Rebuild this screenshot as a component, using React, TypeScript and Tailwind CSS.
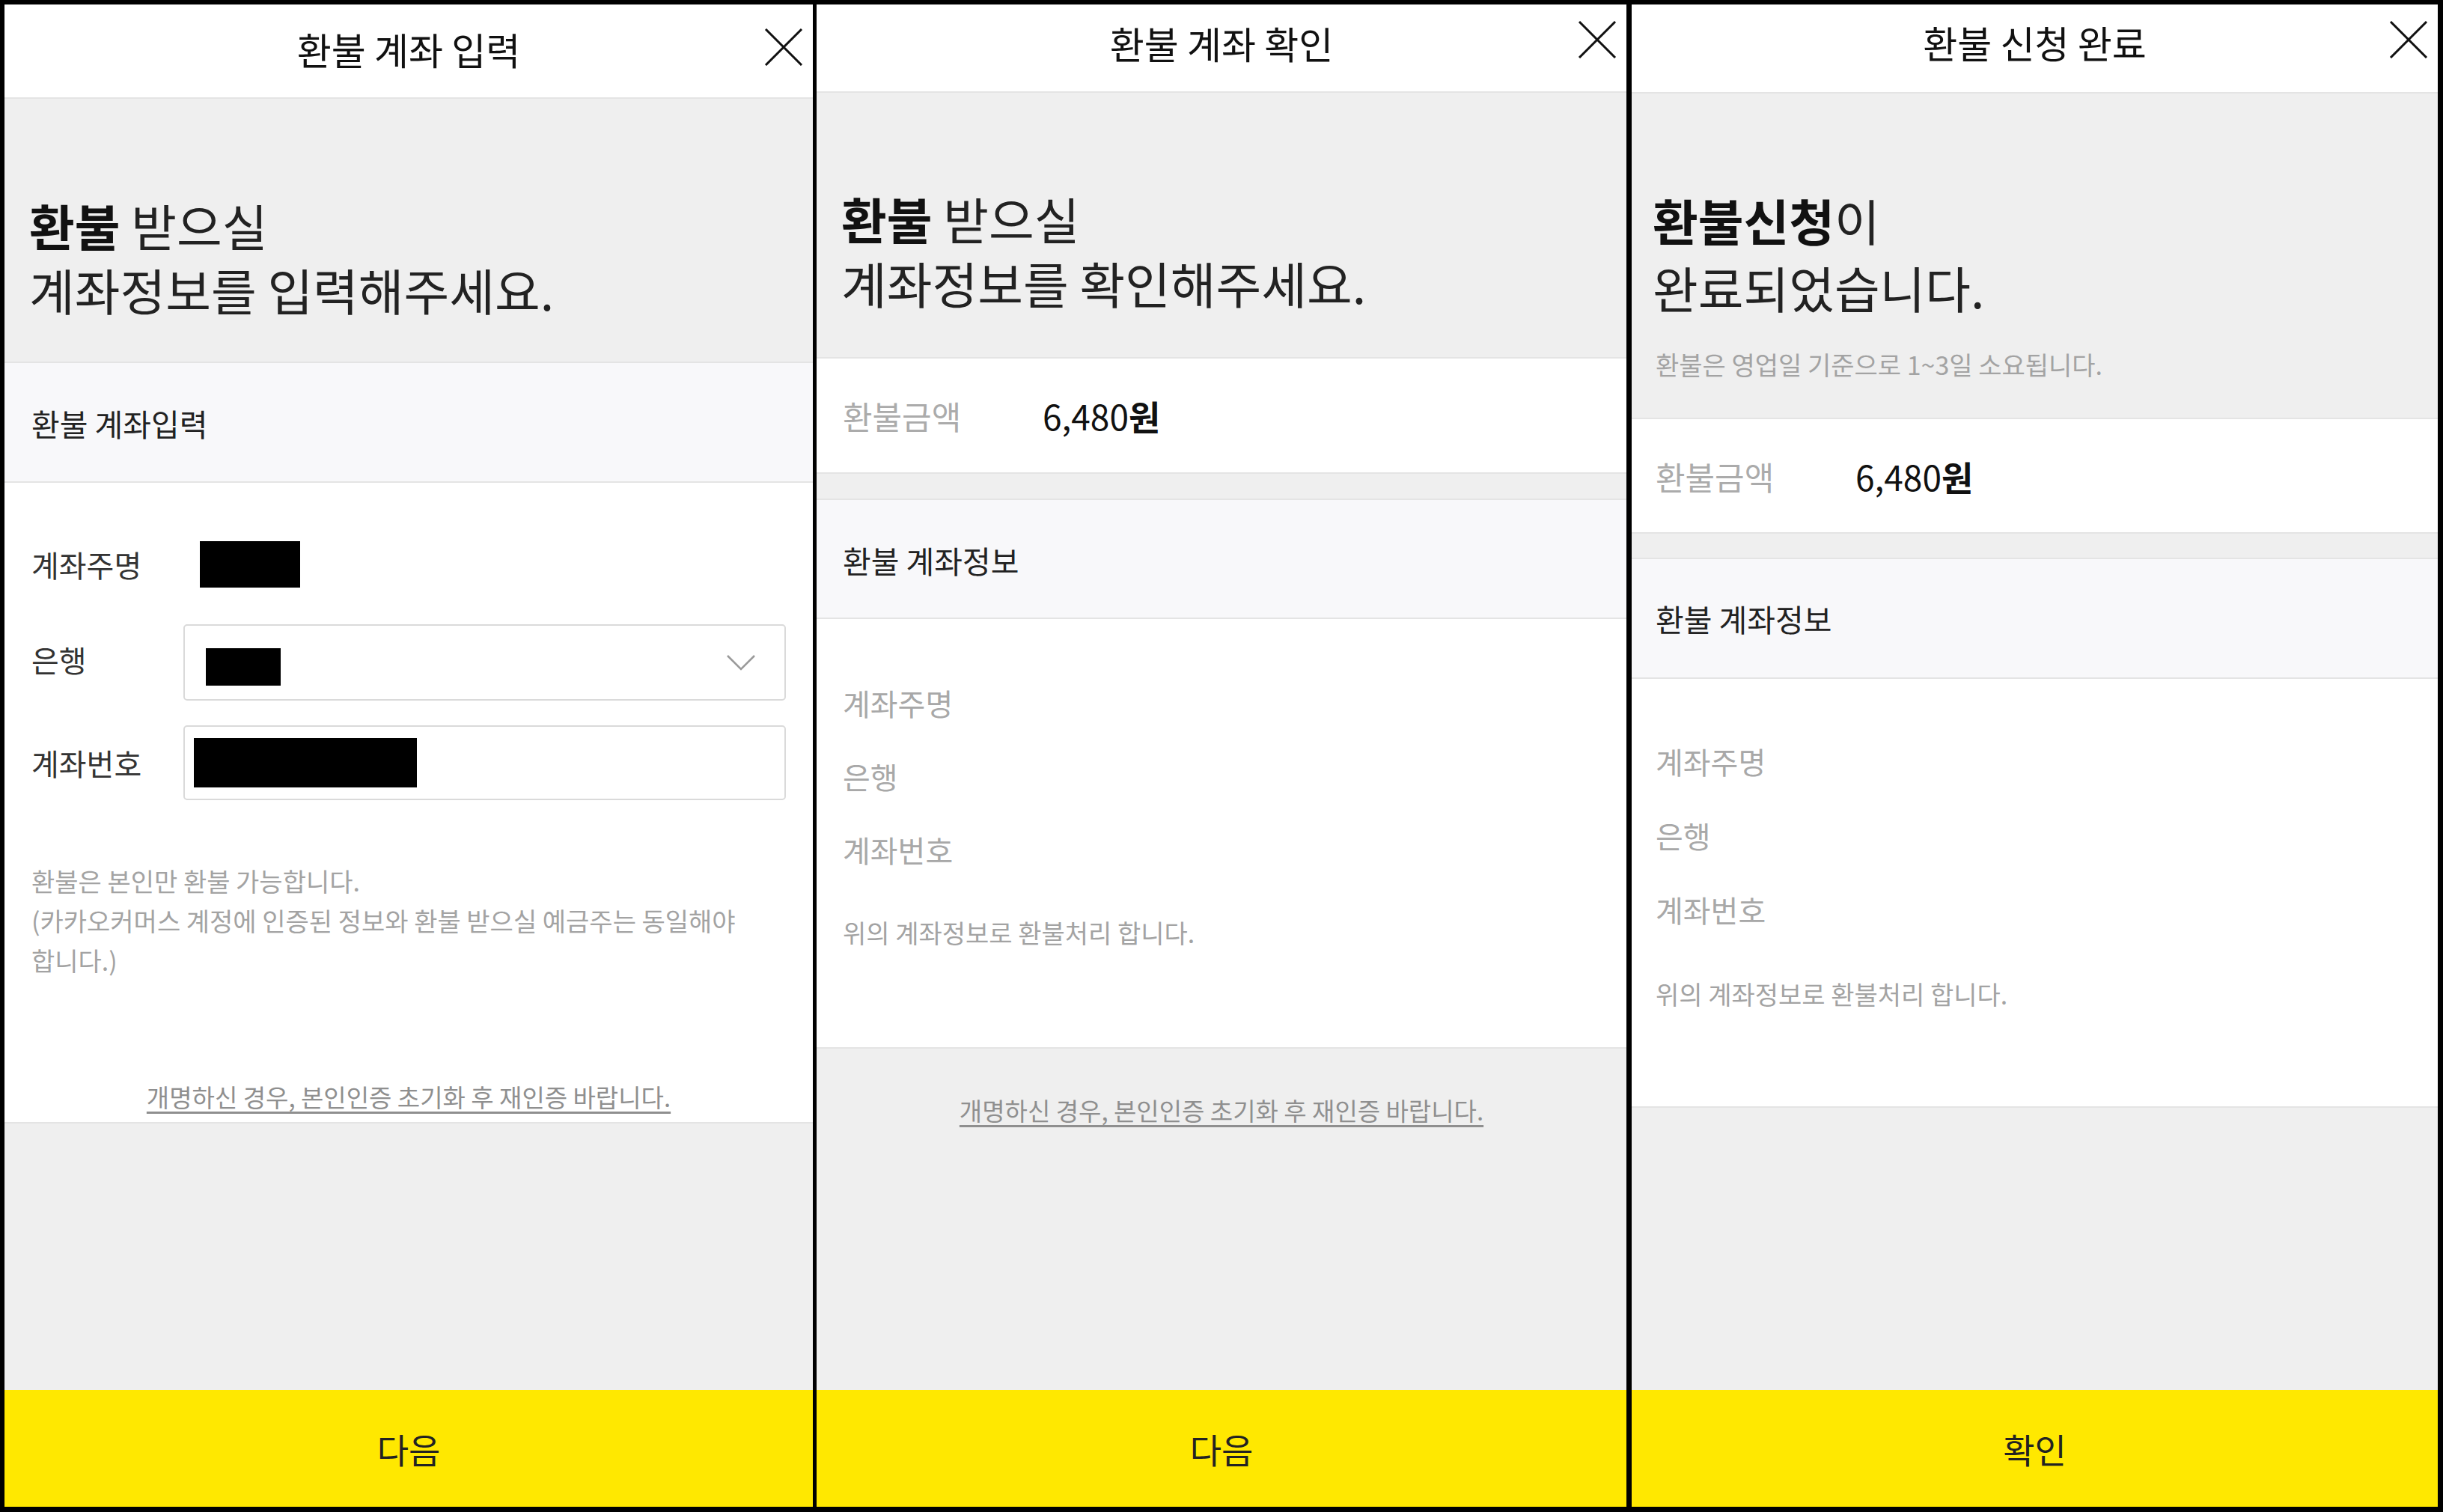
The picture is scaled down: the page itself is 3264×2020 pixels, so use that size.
import clsx from "clsx";

function CloseIcon() {
  return (
    <svg width="52" height="50" viewBox="0 0 52 50" fill="none" stroke="#111" strokeWidth="3">
      <path d="M2 1 L50 49 M50 1 L2 49" />
    </svg>
  );
}

function Chevron() {
  return (
    <svg width="38" height="21" viewBox="0 0 38 21" fill="none" stroke="#9a9a9a" strokeWidth="2.5">
      <path d="M1 1 L19 19 L37 1" />
    </svg>
  );
}

type HeaderProps = { title: string; className: string; iconClass: string };

function Header({ title, className, iconClass }: HeaderProps) {
  return (
    <div
      className={clsx(
        "relative flex shrink-0 items-center justify-center border-b-2 border-[#e4e4e4] bg-white",
        className
      )}
    >
      <span className="text-[50px] leading-[60px] text-[#111]">{title}</span>
      <button type="button" aria-label="close" className={clsx("absolute right-[13px]", iconClass)}>
        <CloseIcon />
      </button>
    </div>
  );
}

// big two-line heading; lines are inline-blocks so their boxes stay within the line height
function Heading({ bold, rest, second, lineClass }: { bold: string; rest: string; second: string; lineClass: string }) {
  return (
    <div className="text-[66px] text-[#222]">
      <div className={clsx("flex", lineClass)}>
        <span className={clsx("inline-block font-bold text-[#111]", lineClass)}>{bold}</span>
        <span className={clsx("inline-block whitespace-pre", lineClass)}>{rest}</span>
      </div>
      <div className={clsx("flex", lineClass)}>
        <span className={clsx("inline-block", lineClass)}>{second}</span>
      </div>
    </div>
  );
}

function Footer({ label }: { label: string }) {
  return (
    <div className="mt-auto flex h-[156px] shrink-0 items-center justify-center bg-[#ffe800]">
      <span className="text-[46px] leading-[54px] text-[#222]">{label}</span>
    </div>
  );
}

function AmountRow({ className }: { className: string }) {
  return (
    <div className={clsx("flex shrink-0 items-center border-b-2 border-[#e4e4e4] bg-white", className)}>
      <span className="w-[267px] text-[43px] leading-[52px] text-[#ababab]">환불금액</span>
      <span className="text-[46px] leading-[54px] text-[#111]">
        6,480<span className="font-bold">원</span>
      </span>
    </div>
  );
}

function InfoRows({ rowClass }: { rowClass: string }) {
  return (
    <div className="text-[40px] text-[#a8a8a8]">
      <div className={rowClass}>계좌주명</div>
      <div className={rowClass}>은행</div>
      <div className={rowClass}>계좌번호</div>
    </div>
  );
}

function InputPanel() {
  return (
    <div className="flex w-[1080px] shrink-0 flex-col bg-[#efefef]">
      <Header title="환불 계좌 입력" className="h-[126px] pb-[6px]" iconClass="top-[32px]" />

      <div className="h-[353px] shrink-0 border-b-2 border-[#e4e4e4] pl-[33px] pt-[125px]">
        <Heading bold="환불" rest=" 받으실" second="계좌정보를 입력해주세요." lineClass="h-[86px] leading-[86px]" />
      </div>

      <div className="flex h-[160px] shrink-0 items-center border-b-2 border-[#e4e4e4] bg-[#f8f8fa] pl-9 pt-[4px] text-[41px] text-[#222]">
        환불 계좌입력
      </div>

      <div className="h-[856px] shrink-0 border-b-2 border-[#e4e4e4] bg-white px-9 pt-[78px]">
        <div className="flex h-[62px] items-center">
          <span className="w-[203px] text-[40px] text-[#333]">계좌주명</span>
          <div className="ml-[22px] h-[62px] w-[134px] bg-black" />
        </div>

        <div className="mt-[49px] flex h-[102px] items-center">
          <span className="-mt-[8px] w-[203px] text-[40px] text-[#333]">은행</span>
          <div className="flex h-full flex-1 items-center justify-between rounded-[5px] border-2 border-[#dadada] pr-[39px]">
            <div className="ml-[28px] mt-[12px] h-[50px] w-[100px] bg-black" />
            <Chevron />
          </div>
        </div>

        <div className="mt-[33px] flex h-[100px] items-center">
          <span className="w-[203px] text-[40px] text-[#333]">계좌번호</span>
          <div className="flex h-full flex-1 items-center rounded-[5px] border-2 border-[#dadada]">
            <div className="ml-[12px] h-[66px] w-[298px] bg-black" />
          </div>
        </div>

        <div className="mt-[81px] break-keep text-[34px] leading-[53px] text-[#a3a3a3]">
          <p>환불은 본인만 환불 가능합니다.</p>
          <p>(카카오커머스 계정에 인증된 정보와 환불 받으실 예금주는 동일해야 합니다.)</p>
        </div>

        <p className="mt-[130px] text-center text-[33px] leading-[53px] text-[#8f8f8f] underline underline-offset-[6px]">
          개명하신 경우, 본인인증 초기화 후 재인증 바랍니다.
        </p>
      </div>

      <Footer label="다음" />
    </div>
  );
}

function ConfirmPanel() {
  return (
    <div className="ml-[5px] flex w-[1082px] shrink-0 flex-col bg-[#efefef]">
      <Header title="환불 계좌 확인" className="h-[118px] pb-[14px]" iconClass="top-[22px]" />

      <div className="h-[355px] shrink-0 border-b-2 border-[#e4e4e4] pl-[33px] pt-[124px]">
        <Heading bold="환불" rest=" 받으실" second="계좌정보를 확인해주세요." lineClass="h-[86px] leading-[86px]" />
      </div>

      <AmountRow className="h-[154px] pl-[35px]" />
      <div className="h-[35px] shrink-0 border-b-2 border-[#e4e4e4]" />

      <div className="flex h-[159px] shrink-0 items-center border-b-2 border-[#e4e4e4] bg-[#f8f8fa] pl-[35px] pt-[4px] text-[41px] text-[#222]">
        환불 계좌정보
      </div>

      <div className="h-[574px] shrink-0 border-b-2 border-[#e4e4e4] bg-white pl-[35px] pt-[63px]">
        <InfoRows rowClass="leading-[98px]" />
        <p className="mt-[35px] text-[34px] leading-[53px] text-[#a3a3a3]">위의 계좌정보로 환불처리 합니다.</p>
      </div>

      <div className="pt-[56px] text-center">
        <p className="text-[33px] leading-[53px] text-[#8f8f8f] underline underline-offset-[6px]">
          개명하신 경우, 본인인증 초기화 후 재인증 바랍니다.
        </p>
      </div>

      <Footer label="다음" />
    </div>
  );
}

function DonePanel() {
  return (
    <div className="ml-[7px] flex w-[1077px] shrink-0 flex-col bg-[#efefef]">
      <Header title="환불 신청 완료" className="h-[119px] pb-[18px]" iconClass="top-[22px]" />

      <div className="h-[435px] shrink-0 border-b-2 border-[#e4e4e4] pl-[28px] pt-[123px]">
        <Heading bold="환불신청" rest="이" second="완료되었습니다." lineClass="h-[90px] leading-[90px]" />
        <p className="mt-[32px] pl-[4px] text-[34px] leading-[53px] text-[#a3a3a3]">
          환불은 영업일 기준으로 1~3일 소요됩니다.
        </p>
      </div>

      <AmountRow className="h-[153px] pl-[32px]" />
      <div className="h-[34px] shrink-0 border-b-2 border-[#e4e4e4]" />

      <div className="flex h-[160px] shrink-0 items-center border-b-2 border-[#e4e4e4] bg-[#f8f8fa] pl-[32px] pt-[2px] text-[41px] text-[#222]">
        환불 계좌정보
      </div>

      <div className="h-[573px] shrink-0 border-b-2 border-[#e4e4e4] bg-white pl-[32px] pt-[61px]">
        <InfoRows rowClass="leading-[99px]" />
        <p className="mt-[36px] text-[34px] leading-[53px] text-[#a3a3a3]">위의 계좌정보로 환불처리 합니다.</p>
      </div>

      <Footer label="확인" />
    </div>
  );
}

export default function App() {
  return (
    <div className="flex h-[2020px] w-[3264px] bg-black pb-[7px] pl-[6px] pr-[7px] pt-[6px] font-['Noto_Sans_CJK_KR','Noto_Sans',sans-serif]">
      <InputPanel />
      <ConfirmPanel />
      <DonePanel />
    </div>
  );
}
